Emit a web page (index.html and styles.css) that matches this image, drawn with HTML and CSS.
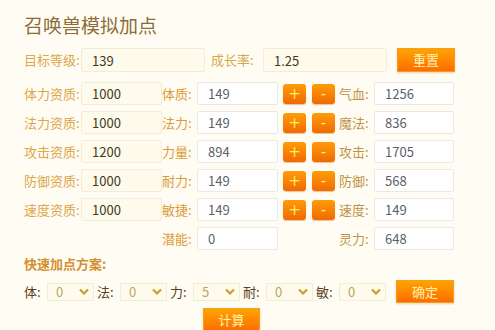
FILE: index.html
```html
<!DOCTYPE html>
<html lang="zh-CN">
<head>
  <meta charset="UTF-8">
  <title>召唤兽模拟加点</title>
  <link rel="stylesheet" href="styles.css">
</head>
<body>
  <div class="panel">
    <h1>召唤兽模拟加点</h1>

    <div class="row top-row">
      <label class="lbl lbl-level">目标等级:</label>
      <input class="inp inp-wide" value="139">
      <label class="lbl lbl-grow">成长率:</label>
      <input class="inp inp-wide" value="1.25">
      <button class="btn btn-reset">重置</button>
    </div>

    <div class="stats">
      <div class="row">
        <label class="lbl lbl-apt">体力资质:</label>
        <input class="inp inp-apt" value="1000">
        <label class="lbl lbl-attr">体质:</label>
        <input class="inp inp-val" value="149">
        <button class="pm">+</button>
        <button class="pm">-</button>
        <label class="lbl lbl-res">气血:</label>
        <input class="inp inp-val inp-res" value="1256">
      </div>
      <div class="row">
        <label class="lbl lbl-apt">法力资质:</label>
        <input class="inp inp-apt" value="1000">
        <label class="lbl lbl-attr">法力:</label>
        <input class="inp inp-val" value="149">
        <button class="pm">+</button>
        <button class="pm">-</button>
        <label class="lbl lbl-res">魔法:</label>
        <input class="inp inp-val inp-res" value="836">
      </div>
      <div class="row">
        <label class="lbl lbl-apt">攻击资质:</label>
        <input class="inp inp-apt" value="1200">
        <label class="lbl lbl-attr">力量:</label>
        <input class="inp inp-val" value="894">
        <button class="pm">+</button>
        <button class="pm">-</button>
        <label class="lbl lbl-res">攻击:</label>
        <input class="inp inp-val inp-res" value="1705">
      </div>
      <div class="row">
        <label class="lbl lbl-apt">防御资质:</label>
        <input class="inp inp-apt" value="1000">
        <label class="lbl lbl-attr">耐力:</label>
        <input class="inp inp-val" value="149">
        <button class="pm">+</button>
        <button class="pm">-</button>
        <label class="lbl lbl-res">防御:</label>
        <input class="inp inp-val inp-res" value="568">
      </div>
      <div class="row">
        <label class="lbl lbl-apt">速度资质:</label>
        <input class="inp inp-apt" value="1000">
        <label class="lbl lbl-attr">敏捷:</label>
        <input class="inp inp-val" value="149">
        <button class="pm">+</button>
        <button class="pm">-</button>
        <label class="lbl lbl-res">速度:</label>
        <input class="inp inp-val inp-res" value="149">
      </div>
      <div class="row">
        <span class="spacer"></span>
        <label class="lbl lbl-attr">潜能:</label>
        <input class="inp inp-val" value="0">
        <span class="pm-gap"></span>
        <label class="lbl lbl-res">灵力:</label>
        <input class="inp inp-val inp-res" value="648">
      </div>
    </div>

    <div class="quick-title">快速加点方案:</div>

    <div class="row quick-row">
      <label class="qlbl">体:</label>
      <div class="sel"><span>0</span><svg width="10" height="7" viewBox="0 0 10 7"><path d="M1 1.5 L5 5.5 L9 1.5" fill="none" stroke="#c9a02a" stroke-width="2.2"/></svg></div>
      <label class="qlbl">法:</label>
      <div class="sel"><span>0</span><svg width="10" height="7" viewBox="0 0 10 7"><path d="M1 1.5 L5 5.5 L9 1.5" fill="none" stroke="#c9a02a" stroke-width="2.2"/></svg></div>
      <label class="qlbl">力:</label>
      <div class="sel"><span>5</span><svg width="10" height="7" viewBox="0 0 10 7"><path d="M1 1.5 L5 5.5 L9 1.5" fill="none" stroke="#c9a02a" stroke-width="2.2"/></svg></div>
      <label class="qlbl">耐:</label>
      <div class="sel"><span>0</span><svg width="10" height="7" viewBox="0 0 10 7"><path d="M1 1.5 L5 5.5 L9 1.5" fill="none" stroke="#c9a02a" stroke-width="2.2"/></svg></div>
      <label class="qlbl">敏:</label>
      <div class="sel"><span>0</span><svg width="10" height="7" viewBox="0 0 10 7"><path d="M1 1.5 L5 5.5 L9 1.5" fill="none" stroke="#c9a02a" stroke-width="2.2"/></svg></div>
      <button class="btn btn-ok">确定</button>
    </div>

    <div class="calc-row">
      <button class="btn btn-calc">计算</button>
    </div>
  </div>
</body>
</html>
```

FILE: styles.css
```css
body {
  margin: 0;
  background: #fffdf3;
  font-family: "Noto Sans CJK SC", "Noto Sans", sans-serif;
  font-size: 13px;
}

.panel {
  padding: 13px 0 0 24px;
}

h1 {
  margin: 0 0 11px;
  font-size: 19px;
  line-height: 24px;
  font-weight: normal;
  color: #8c6c38;
}

.row {
  display: flex;
  align-items: center;
}

.top-row {
  height: 24px;
  margin-bottom: 10px;
}

.lbl {
  color: #dba64c;
  white-space: nowrap;
  line-height: 16px;
}

.lbl-level { width: 57px; }
.lbl-grow { width: 52px; margin-left: 6px; }
.lbl-apt { width: 57px; }
.lbl-attr { width: 35px; color: #dc9a3a; }
.lbl-res { width: 35px; margin-left: 4px; color: #bf9248; }

.inp {
  box-sizing: border-box;
  height: 23px;
  padding: 0 0 0 10px;
  border: 1px solid #f3ecd8;
  border-radius: 2px;
  background: #fffbec;
  font-family: "Noto Sans CJK SC", "Noto Sans", sans-serif;
  font-size: 13px;
  color: #3c3a22;
  outline: none;
}

.inp-wide {
  width: 124px;
  height: 24px;
}

.inp-apt {
  width: 81px;
}

.inp-val {
  width: 81px;
  background: #fff;
  border-color: #eee9de;
  color: #5a5f6a;
}

.inp-res {
  width: 80px;
}

.stats {
  display: flex;
  flex-direction: column;
  gap: 6px;
}

.spacer {
  width: 138px;
}

.pm {
  box-sizing: border-box;
  width: 23px;
  height: 20px;
  margin-left: 5px;
  padding: 0;
  border: none;
  border-radius: 3px;
  background: linear-gradient(#ff9c0a, #f06a00);
  box-shadow: 0 1px 1px rgba(180, 90, 0, 0.35);
  color: #ffe86a;
  font-family: "DejaVu Sans", sans-serif;
  font-size: 15px;
  line-height: 20px;
}

.pm + .pm {
  margin-left: 6px;
}

.pm-gap {
  width: 57px;
}

.btn {
  box-sizing: border-box;
  width: 58px;
  height: 24px;
  padding: 0;
  border: 1px solid #f0a020;
  background: linear-gradient(#ffa400, #ff6c00);
  box-shadow: 0 1px 2px rgba(200, 110, 0, 0.3);
  color: #fff2b0;
  font-family: "Noto Sans CJK SC", sans-serif;
  font-size: 13px;
  line-height: 22px;
}

.btn-reset {
  margin-left: 10px;
}

.quick-title {
  margin-top: 6px;
  line-height: 16px;
  font-weight: bold;
  color: #d49030;
}

.quick-row {
  margin-top: 8px;
  height: 23px;
}

.qlbl {
  width: 23px;
  color: #5a4020;
  line-height: 16px;
}

.sel {
  box-sizing: border-box;
  display: flex;
  align-items: center;
  justify-content: space-between;
  width: 47px;
  height: 18px;
  margin-right: 3px;
  padding: 0 4px 0 8px;
  border: 1px solid #f3ecd8;
  background: #fffbec;
  color: #bca468;
  font-size: 13px;
}

.btn-ok {
  margin-left: 7px;
  height: 23px;
}

.calc-row {
  margin-top: 5px;
  padding-left: 179px;
}

.btn-calc {
  width: 57px;
  height: 24px;
}
```
